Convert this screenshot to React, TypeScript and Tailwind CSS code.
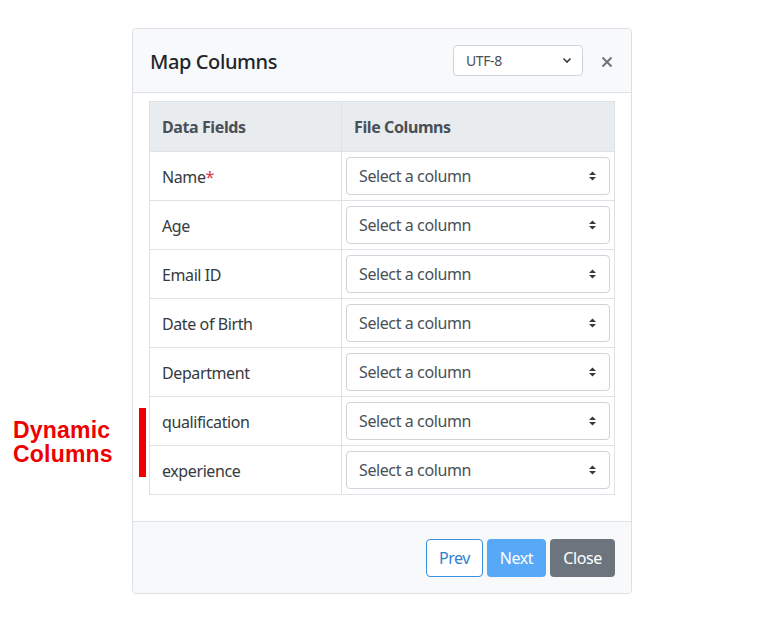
const fields = [
  { label: "Name", required: true },
  { label: "Age" },
  { label: "Email ID" },
  { label: "Date of Birth" },
  { label: "Department" },
  { label: "qualification" },
  { label: "experience" },
];

const SortArrows = () => (
  <svg width="9" height="12" viewBox="0 0 9 12" className="text-[#343a40]">
    <path d="M1 5 L4.5 1.5 L8 5 Z" fill="currentColor" />
    <path d="M1 7 L4.5 10.5 L8 7 Z" fill="currentColor" />
  </svg>
);

const ColumnSelect = () => (
  <div className="flex h-[38px] items-center justify-between rounded border border-[#ced4da] bg-white pl-3 pr-3 text-[16px] text-[#495057]">
    <span>Select a column</span>
    <SortArrows />
  </div>
);

const App = () => {
  return (
    <div
      className="relative h-[622px] w-[764px] bg-white tracking-[-0.4px]"
      style={{ fontFamily: '"Noto Sans", "Open Sans", sans-serif' }}
    >
      <div
        className="absolute left-[13px] top-[418px] text-[23px] font-bold leading-[24px] tracking-[0.2px] text-[#ee0000]"
        style={{ fontFamily: '"Liberation Sans", Arial, sans-serif' }}
      >
        <div>Dynamic</div>
        <div>Columns</div>
      </div>
      <div className="absolute left-[139px] top-[408px] h-[69px] w-[7px] bg-[#ee0000]" />

      <div className="ml-[132px] pt-[28px]">
        <div className="w-[500px] overflow-hidden rounded border border-[#dcdfe3] bg-white">
          <div className="flex h-[64px] items-center justify-between border-b border-[#dee2e6] bg-[#f8f9fa] pl-[17px] pr-[18px]">
            <h2 className="mt-[2px] text-[20px] font-medium text-[#212529]">Map Columns</h2>
            <div className="flex items-center gap-[18px]">
              <div className="flex h-[31px] w-[130px] items-center justify-between rounded border border-[#ced4da] bg-white pl-3 pr-[10px] text-[14px] text-[#495057]">
                <span>UTF-8</span>
                <svg width="10" height="7" viewBox="0 0 10 7">
                  <path d="M1.5 1.5 L5 5 L8.5 1.5" fill="none" stroke="#343a40" strokeWidth="1.6" />
                </svg>
              </div>
              <svg width="12" height="12" viewBox="0 0 12 12" className="mt-[2px]">
                <path d="M1.5 1.5 L10.5 10.5 M10.5 1.5 L1.5 10.5" stroke="#6c757d" strokeWidth="2" />
              </svg>
            </div>
          </div>

          <div className="px-4 pb-[26px] pt-2">
            <table className="w-full border-collapse text-[16px] text-[#343a40]">
              <thead>
                <tr className="bg-[#e9ecef] text-[#495057]">
                  <th className="h-[50px] w-[192px] border border-[#dee2e6] px-3 text-left font-bold">Data Fields</th>
                  <th className="h-[50px] border border-[#dee2e6] px-3 text-left font-bold">File Columns</th>
                </tr>
              </thead>
              <tbody>
                {fields.map((f) => (
                  <tr key={f.label}>
                    <td className="h-[49px] border border-[#dee2e6] px-3 pt-[2px]">
                      {f.label}
                      {f.required && <span className="text-[#dc3545]">*</span>}
                    </td>
                    <td className="border border-[#dee2e6] px-[4px] py-[4px]">
                      <ColumnSelect />
                    </td>
                  </tr>
                ))}
              </tbody>
            </table>
          </div>

          <div className="flex h-[72px] items-center justify-end gap-[4px] border-t border-[#dee2e6] bg-[#f8f9fa] pr-[16px] text-[16px]">
            <button className="h-[38px] w-[57px] rounded border border-[#3a8ee0] bg-white text-[#2f80d1]">Prev</button>
            <button className="h-[38px] w-[59px] rounded bg-[#57a8f7] text-white">Next</button>
            <button className="h-[38px] w-[65px] rounded bg-[#6c757d] text-white">Close</button>
          </div>
        </div>
      </div>
    </div>
  );
};

export default App;
